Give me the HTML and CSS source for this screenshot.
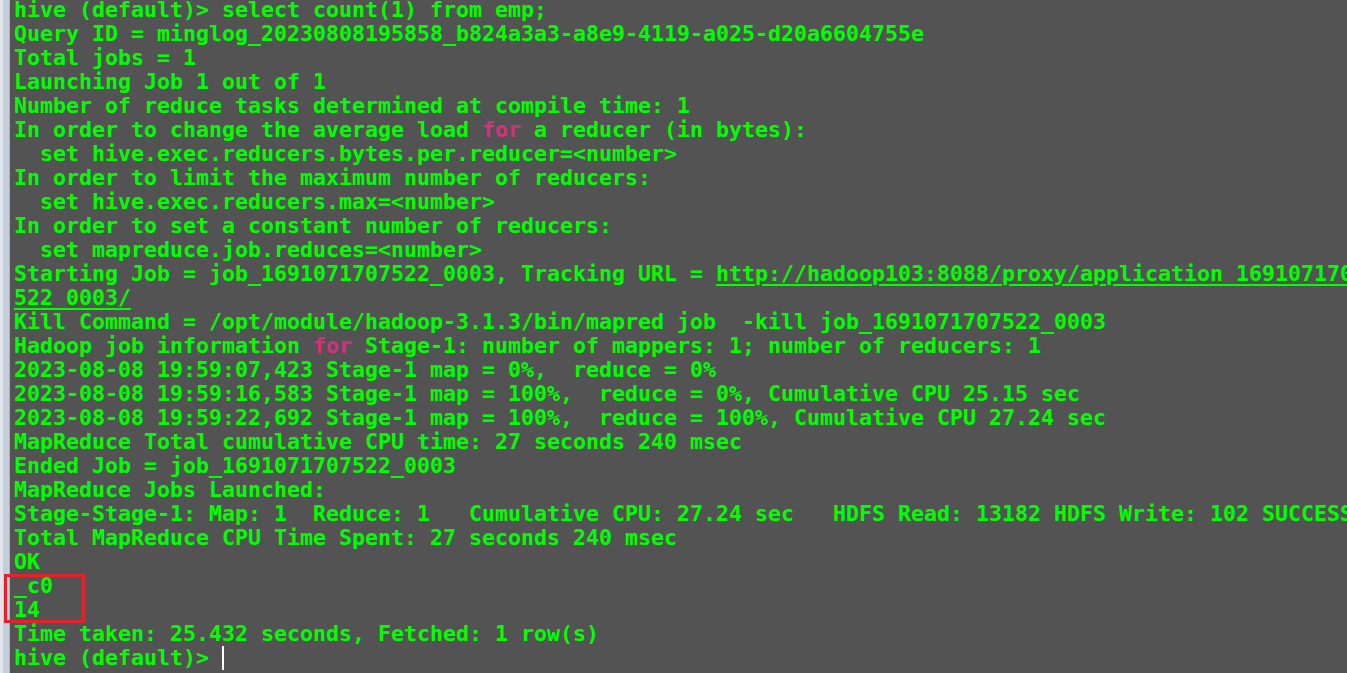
FILE: index.html
```html
<!DOCTYPE html>
<html>
<head>
<meta charset="utf-8">
<link rel="stylesheet" href="styles.css">
</head>
<body>
<div class="window">
  <div class="gutter"><div class="gutter-light"></div><div class="gutter-main"></div></div>
  <div class="term">
<pre class="out">hive (default)&gt; select count(1) from emp;
Query ID = minglog_20230808195858_b824a3a3-a8e9-4119-a025-d20a6604755e
Total jobs = 1
Launching Job 1 out of 1
Number of reduce tasks determined at compile time: 1
In order to change the average load <span class="kw">for</span> a reducer (in bytes):
  set hive.exec.reducers.bytes.per.reducer=&lt;number&gt;
In order to limit the maximum number of reducers:
  set hive.exec.reducers.max=&lt;number&gt;
In order to set a constant number of reducers:
  set mapreduce.job.reduces=&lt;number&gt;
Starting Job = job_1691071707522_0003, Tracking URL = <span class="link">http://hadoop103:8088/proxy/application_1691071707</span>
<span class="link">522_0003/</span>
Kill Command = /opt/module/hadoop-3.1.3/bin/mapred job  -kill job_1691071707522_0003
Hadoop job information <span class="kw">for</span> Stage-1: number of mappers: 1; number of reducers: 1
2023-08-08 19:59:07,423 Stage-1 map = 0%,  reduce = 0%
2023-08-08 19:59:16,583 Stage-1 map = 100%,  reduce = 0%, Cumulative CPU 25.15 sec
2023-08-08 19:59:22,692 Stage-1 map = 100%,  reduce = 100%, Cumulative CPU 27.24 sec
MapReduce Total cumulative CPU time: 27 seconds 240 msec
Ended Job = job_1691071707522_0003
MapReduce Jobs Launched:
Stage-Stage-1: Map: 1  Reduce: 1   Cumulative CPU: 27.24 sec   HDFS Read: 13182 HDFS Write: 102 SUCCESS
Total MapReduce CPU Time Spent: 27 seconds 240 msec
OK
_c0
14
Time taken: 25.432 seconds, Fetched: 1 row(s)
hive (default)&gt; <span class="cursor"></span></pre>
  </div>
  <div class="highlight"></div>
</div>
</body>
</html>
```

FILE: styles.css
```css
html, body {
  margin: 0;
  padding: 0;
  width: 1347px;
  height: 673px;
  overflow: hidden;
  background: #535353;
}
.window {
  position: relative;
  display: flex;
  width: 1347px;
  height: 673px;
  overflow: hidden;
}
.gutter {
  display: flex;
  flex: 0 0 10px;
  height: 100%;
}
.gutter-light {
  width: 3px;
  background: #e1e5ec;
}
.gutter-main {
  width: 7px;
  background: #c5cedb;
  border-right: 1px solid #aab4c2;
  box-sizing: border-box;
}
.term {
  flex: 1;
  background: #535353;
  padding-left: 4px;
  overflow: hidden;
}
.out {
  margin: -2px 0 0 0;
  font-family: "DejaVu Sans Mono", "Liberation Mono", monospace;
  font-weight: bold;
  font-size: 21.6px;
  line-height: 24px;
  color: #00ff00;
  white-space: pre;
}
.kw {
  color: #d6307f;
}
.link {
  text-decoration: underline;
  text-underline-offset: 3px;
  text-decoration-thickness: 2px;
}
.cursor {
  display: inline-block;
  width: 2px;
  height: 24px;
  background: #ffffff;
  vertical-align: top;
  margin-left: 0;
}
.highlight {
  position: absolute;
  left: 4px;
  top: 574px;
  width: 81px;
  height: 49px;
  box-sizing: border-box;
  border: 3px solid #e8202a;
}
```
